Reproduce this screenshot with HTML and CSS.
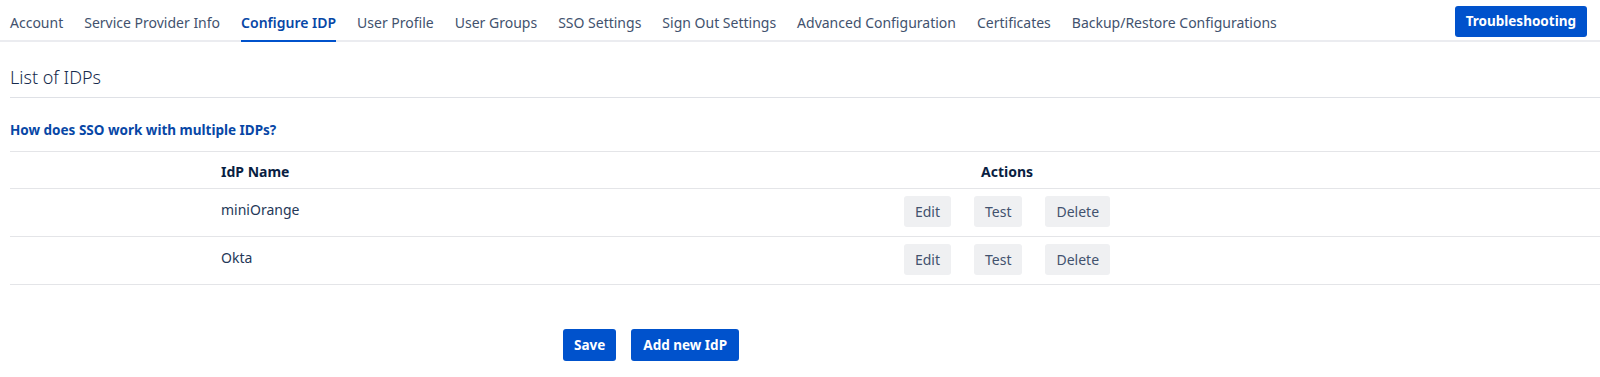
FILE: index.html
```html
<!DOCTYPE html>
<html lang="en">
<head>
<meta charset="utf-8">
<title>Configure IDP</title>
<link rel="stylesheet" href="styles.css">
</head>
<body>
<nav class="nav">
  <a class="tab">Account</a>
  <a class="tab">Service Provider Info</a>
  <a class="tab active">Configure IDP</a>
  <a class="tab">User Profile</a>
  <a class="tab">User Groups</a>
  <a class="tab">SSO Settings</a>
  <a class="tab">Sign Out Settings</a>
  <a class="tab">Advanced Configuration</a>
  <a class="tab">Certificates</a>
  <a class="tab">Backup/Restore Configurations</a>
  <button class="btn-primary trouble">Troubleshooting</button>
</nav>
<main class="content">
  <h2 class="title">List of IDPs</h2>
  <div class="help"><a class="help-link">How does SSO work with multiple IDPs?</a></div>
  <div class="table">
    <div class="row head">
      <div class="cell spacer"></div>
      <div class="cell name">IdP Name</div>
      <div class="cell actions">Actions</div>
      <div class="cell"></div>
    </div>
    <div class="row">
      <div class="cell spacer"></div>
      <div class="cell name">miniOrange</div>
      <div class="cell actions"><button class="btn-sub">Edit</button><button class="btn-sub">Test</button><button class="btn-sub">Delete</button></div>
      <div class="cell"></div>
    </div>
    <div class="row">
      <div class="cell spacer"></div>
      <div class="cell name">Okta</div>
      <div class="cell actions"><button class="btn-sub">Edit</button><button class="btn-sub">Test</button><button class="btn-sub">Delete</button></div>
      <div class="cell"></div>
    </div>
  </div>
  <div class="footer">
    <button class="btn-primary">Save</button>
    <button class="btn-primary wide">Add new IdP</button>
  </div>
</main>
</body>
</html>
```
FILE: styles.css
```css
* { box-sizing: border-box; }
body {
  margin: 0;
  font-family: "Noto Sans", "Open Sans", sans-serif;
  font-size: 14px;
  color: #172b4d;
  background: #fff;
}
.nav {
  display: flex;
  align-items: center;
  gap: 21px;
  height: 42px;
  padding-left: 10px;
  border-bottom: 2px solid #ebecf0;
}
.tab {
  color: #42526e;
  font-size: 14px;
  height: 40px;
  line-height: 45px;
  white-space: nowrap;
}
.tab.active {
  color: #0747a6;
  font-weight: 600;
  border-bottom: 2px solid #0052cc;
  height: 42px;
  margin-bottom: -2px;
}
.btn-primary {
  font-family: inherit;
  background: #0052cc;
  color: #fff;
  border: 0;
  border-radius: 3px;
  font-weight: 700;
  font-size: 13.5px;
  height: 32px;
  padding: 0 11px;
}
.btn-primary.wide {
  padding: 0 12px;
}
.trouble {
  margin-left: auto;
  margin-right: 13px;
  margin-top: 2px;
  height: 31px;
}
.content {
  padding-left: 10px;
}
.title {
  margin: 0;
  font-size: 18px;
  font-weight: 300;
  color: #172b4d;
  line-height: 24px;
  padding: 23px 0 8px;
  border-bottom: 1px solid #dfe1e6;
}
.help {
  padding: 22px 0 11px;
  line-height: 20px;
  border-bottom: 1px solid #e4e5e8;
}
.help-link {
  color: #0747a6;
  font-weight: 700;
  font-size: 13.5px;
}
.row {
  display: grid;
  grid-template-columns: 211px 280px 1012px 1fr;
  border-bottom: 1px solid #e4e5e8;
  padding: 7px 0 9px;
}
.row.head {
  padding: 10px 0 6px;
  font-weight: 700;
  color: #091e42;
}
.cell {
  line-height: 20px;
}
.row:not(.head) .name {
  padding-top: 4px;
  color: #253858;
}
.actions {
  display: flex;
  justify-content: center;
  gap: 23px;
}
.btn-sub {
  font-family: inherit;
  font-size: 14px;
  background: #eff0f2;
  color: #42526e;
  border: 0;
  border-radius: 3px;
  height: 31px;
  padding: 0 11px;
}
.footer {
  display: flex;
  gap: 15px;
  margin-top: 44px;
  padding-left: 553px;
}
```
